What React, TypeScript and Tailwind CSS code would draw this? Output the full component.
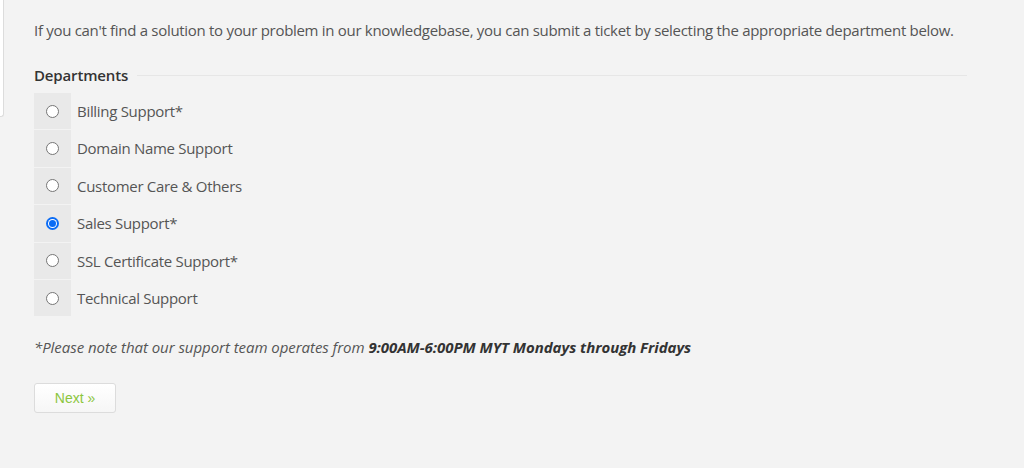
import React from 'react';

interface Department {
  id: string;
  label: string;
}

const departments: Department[] = [
  { id: 'billing', label: 'Billing Support*' },
  { id: 'domain', label: 'Domain Name Support' },
  { id: 'care', label: 'Customer Care & Others' },
  { id: 'sales', label: 'Sales Support*' },
  { id: 'ssl', label: 'SSL Certificate Support*' },
  { id: 'tech', label: 'Technical Support' },
];

const Radio: React.FC<{ checked: boolean }> = ({ checked }) =>
  checked ? (
    <span className="w-[13px] h-[13px] rounded-full bg-[#0b6cf5] flex items-center justify-center">
      <span className="w-[9px] h-[9px] rounded-full bg-white flex items-center justify-center">
        <span className="w-[7px] h-[7px] rounded-full bg-[#0b6cf5]" />
      </span>
    </span>
  ) : (
    <span className="w-[13px] h-[13px] rounded-full border border-[#767676] bg-white" />
  );

export default function App() {
  const [selected, setSelected] = React.useState('sales');

  return (
    <div
      className="w-[1024px] h-[468px] bg-[#f3f3f3] flex overflow-hidden"
      style={{ fontFamily: '"Open Sans", "Noto Sans", sans-serif' }}
    >
      {/* edge of the sidebar panel */}
      <div className="w-[4px] h-[117px] shrink-0 border-r border-b border-[#dcdcdc] rounded-br-[3px] bg-white" />

      <div className="pl-[30px] w-[963px] shrink-0">
        <p className="mt-[19px] text-[15px] leading-[22px] text-[#555] tracking-[-0.3px] whitespace-nowrap">
          If you can't find a solution to your problem in our knowledgebase, you can submit a ticket by selecting the
          appropriate department below.
        </p>

        <div className="mt-[23px] flex items-center">
          <h3 className="text-[15px] leading-[22px] font-semibold text-[#333] pr-[9px] tracking-[-0.15px]">Departments</h3>
          <div className="flex-1 border-t border-[#e6e6e6]" />
        </div>

        <div className="mt-[7px] flex flex-col gap-[1px]">
          {departments.map((d) => (
            <label key={d.id} className="flex items-center h-[36.4px] cursor-pointer" onClick={() => setSelected(d.id)}>
              <span className="w-[37px] h-full bg-[#e9e9e9] flex items-center justify-center">
                <Radio checked={selected === d.id} />
              </span>
              <span className="ml-[6px] text-[15px] text-[#555] tracking-[-0.3px]">{d.label}</span>
            </label>
          ))}
        </div>

        <p className="mt-[20px] text-[15px] leading-[22px] italic text-[#555] tracking-[-0.05px]">
          *Please note that our support team operates from{' '}
          <strong className="font-bold text-[#333]">9:00AM-6:00PM MYT Mondays through Fridays</strong>
        </p>

        <button
          className="mt-[25px] w-[82px] h-[30px] rounded-[3px] border border-[#dcdcdc] bg-gradient-to-b from-white to-[#f6f6f6] text-[#8cc63e] text-[14px]"
          style={{ fontFamily: '"Liberation Sans", Arial, sans-serif' }}
        >
          Next »
        </button>
      </div>
    </div>
  );
}
